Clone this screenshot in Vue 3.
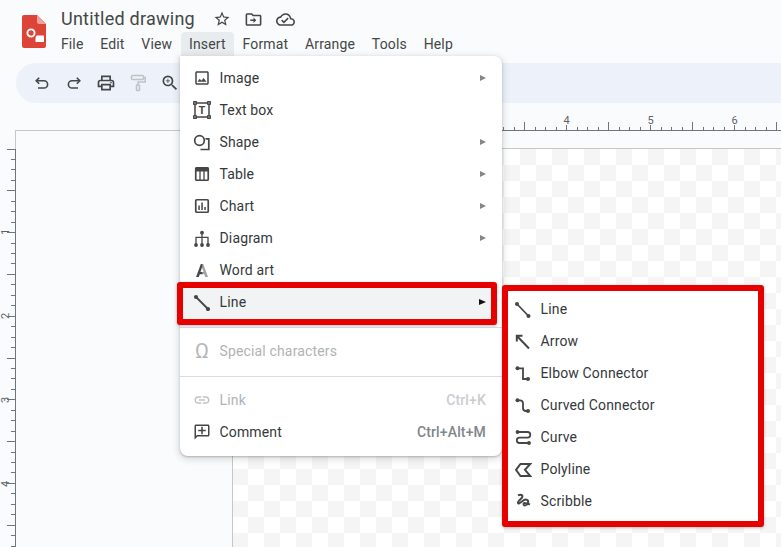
<script setup>
const menuBar = ['File', 'Edit', 'View', 'Insert', 'Format', 'Arrange', 'Tools', 'Help']

const hTicks = []
for (let i = 0; i <= 56; i++) {
  hTicks.push({ x: Math.round(230 + i * 10.5) + 0.5, h: i % 8 === 0 ? 5 : i % 4 === 0 ? 8 : 3 })
}
const vTicks = []
for (let i = 0; i <= 40; i++) {
  vTicks.push({ y: Math.floor(18 + i * 10.45), w: i % 4 === 0 ? 8 : 4 })
}
const hNums = [4, 5, 6].map(n => ({ n, x: 230 + n * 84 + 0.5 }))
const vNums = [1, 2, 3, 4].map(n => ({ n, y: 17 + n * 84 }))
</script>

<template>
  <div class="app">
    <header class="header">
      <svg class="logo" width="24" height="33" viewBox="0 0 24 33">
        <path d="M2 0h13l9 9v22a2 2 0 0 1-2 2H2a2 2 0 0 1-2-2V2a2 2 0 0 1 2-2z" fill="#db4437" />
        <path d="M15 0l9 9h-7a2 2 0 0 1-2-2z" fill="#eea29a" />
        <circle cx="9" cy="18" r="3.6" fill="none" stroke="#fff" stroke-width="1.9" />
        <path d="M14.6 20.5H22V27H13.5v-4.4a5.6 5.6 0 0 0 1.1-2.1z" fill="#fff" />
      </svg>
      <div class="titles">
        <div class="title-row">
          <span class="doc-title">Untitled drawing</span>
          <svg class="star" width="18" height="18" viewBox="0 0 24 24"><path d="M22 9.24l-7.19-.62L12 2 9.19 8.63 2 9.24l5.46 4.73L5.82 21 12 17.27 18.18 21l-1.63-7.03L22 9.24zM12 15.4l-3.76 2.27 1-4.28-3.32-2.88 4.38-.38L12 6.1l1.71 4.04 4.38.38-3.32 2.88 1 4.28L12 15.4z" /></svg>
          <svg class="folder" width="19" height="19" viewBox="0 0 24 24"><path d="M20 6h-8l-2-2H4c-1.1 0-1.99.9-1.99 2L2 18c0 1.1.9 2 2 2h16c1.1 0 2-.9 2-2V8c0-1.1-.9-2-2-2zm0 12H4V6h5.17l2 2H20v10zM12 14H8v-2h4v-2.5l3.5 3.5-3.5 3.5V14z" /></svg>
          <svg class="cloud" width="19" height="19" viewBox="0 0 24 24"><path d="M19.35 10.04C18.67 6.59 15.64 4 12 4 9.11 4 6.6 5.64 5.35 8.04 2.34 8.36 0 10.91 0 14c0 3.31 2.69 6 6 6h13c2.76 0 5-2.24 5-5 0-2.64-2.05-4.78-4.65-4.96zM19 18H6c-2.21 0-4-1.79-4-4 0-2.05 1.53-3.76 3.56-3.97l1.07-.11.5-.95C8.08 7.14 9.94 6 12 6c2.62 0 4.88 1.86 5.39 4.43l.3 1.5 1.53.11c1.56.1 2.78 1.41 2.78 2.96 0 1.65-1.35 3-3 3zm-9-3.82l-2.09-2.09L6.5 13.5 10 17l6.01-6.01-1.41-1.41z" /></svg>
        </div>
        <nav class="menubar">
          <span v-for="m in menuBar" :key="m" class="menubar-item" :class="{ open: m === 'Insert' }">{{ m }}</span>
        </nav>
      </div>
    </header>

    <div class="toolbar">
      <span class="tool"><svg width="18" height="18" viewBox="0 0 18 18" class="st"><path d="M3.500 6.800H11a3.600 3.600 0 0 1 0 7.200H5" /><path d="M6.200 3.800L3.200 6.800l3 3" /></svg></span>
      <span class="tool"><svg width="18" height="18" viewBox="0 0 18 18" class="st"><path d="M14.500 6.800H7a3.600 3.600 0 0 0 0 7.200h6" /><path d="M11.800 3.800l3 3-3 3" /></svg></span>
      <span class="tool"><svg width="20" height="20" viewBox="0 0 24 24"><path d="M19 8h-1V3H6v5H5c-1.66 0-3 1.34-3 3v6h4v4h12v-4h4v-6c0-1.66-1.34-3-3-3zM8 5h8v3H8V5zm8 14H8v-4h8v4zm2-4v-2H6v2H4v-4c0-.55.45-1 1-1h14c.55 0 1 .45 1 1v4h-2z" /><circle cx="18" cy="11.500" r="1" /></svg></span>
      <span class="tool"><svg width="18" height="18" viewBox="0 0 18 18" class="paint"><rect x="2.500" y="1.500" width="12" height="4" rx="1" /><path d="M14.500 3.500H16.200V8H9V11" /><rect x="7.500" y="11" width="3" height="5.500" rx=".6" /></svg></span>
      <span class="tool"><svg width="20" height="20" viewBox="0 0 24 24"><path d="M15.500 14h-.79l-.28-.27A6.470 6.470 0 0 0 16 9.500 6.500 6.500 0 1 0 9.500 16c1.610 0 3.090-.59 4.230-1.570l.27.28v.79l5 4.990L20.490 19l-4.990-5zm-6 0C7.010 14 5 11.990 5 9.500S7.010 5 9.500 5 14 7.010 14 9.500 11.990 14 9.500 14z" /><path d="M10 7H9v2H7v1h2v2h1v-2h2V9h-2z" /></svg></span>
    </div>

    <svg class="hruler" width="781" height="28" viewBox="0 0 781 28">
      <rect x="15" y="27" width="217" height="1" fill="#c7c7c7" />
      <rect x="232" y="27" width="549" height="1" fill="#70757a" />
      <rect v-for="t in hTicks" :key="t.x" :x="t.x - 0.5" :y="27 - t.h" width="1" :height="t.h" fill="#70757a" />
      <text v-for="n in hNums" :key="n.n" :x="n.x" y="21" class="rnum" text-anchor="middle">{{ n.n }}</text>
    </svg>

    <div class="workspace">
      <svg class="vruler" width="16" height="416" viewBox="0 0 16 416">
        <rect x="15" y="0" width="1" height="18" fill="#c7c7c7" />
        <rect x="15" y="18" width="1" height="398" fill="#70757a" />
        <rect v-for="t in vTicks" :key="t.y" :x="15 - t.w" :y="t.y" :width="t.w" height="1" fill="#70757a" />
        <text v-for="n in vNums" :key="n.n" class="rnum" text-anchor="middle" :transform="`translate(8.5 ${n.y}) rotate(-90)`">{{ n.n }}</text>
      </svg>
      <div class="page"></div>
      <div class="stage">
        <div class="stage-strip"></div>
        <div class="canvas"></div>
      </div>
    </div>

    <div class="menu">
      <div class="row">
        <svg class="ic" width="18" height="18" viewBox="0 0 24 24"><path d="M19 5v14H5V5h14m0-2H5c-1.100 0-2 .9-2 2v14c0 1.100.9 2 2 2h14c1.100 0 2-.9 2-2V5c0-1.100-.9-2-2-2zm-4.860 8.860l-3 3.870L9 13.140 6 17h12l-3.860-5.140z" /></svg>
        <span class="label">Image</span><i class="tri"></i>
      </div>
      <div class="row">
        <svg class="ic st1" width="18" height="18" viewBox="0 0 18 18">
          <path d="M2 3.500V14.500M14.500 16H3.500M16 14.500V3.500M3.500 2H14.500" />
          <rect x=".7" y=".7" width="2.600" height="2.600" rx=".4" /><rect x="14.700" y=".7" width="2.600" height="2.600" rx=".4" /><rect x=".7" y="14.700" width="2.600" height="2.600" rx=".4" /><rect x="14.700" y="14.700" width="2.600" height="2.600" rx=".4" />
          <text x="9" y="13" class="tglyph" text-anchor="middle">T</text>
        </svg>
        <span class="label">Text box</span>
      </div>
      <div class="row">
        <svg class="ic st15" width="18" height="18" viewBox="0 0 18 18"><circle cx="6.500" cy="7.500" r="4.800" /><path d="M12.500 5.800H15.800V16.500H7.500" /></svg>
        <span class="label">Shape</span><i class="tri"></i>
      </div>
      <div class="row">
        <svg class="ic st15" width="18" height="18" viewBox="0 0 18 18"><rect x="2.750" y="2.750" width="12.500" height="12.500" rx="1" /><rect class="fl" x="2.500" y="2.500" width="13" height="4" /><path class="thin" d="M7 6V15M11 6V15" /></svg>
        <span class="label">Table</span><i class="tri"></i>
      </div>
      <div class="row">
        <svg class="ic st15" width="18" height="18" viewBox="0 0 18 18"><rect x="2.750" y="2.750" width="12.500" height="12.500" rx="1" /><rect class="fl" x="5.300" y="8.500" width="1.500" height="4.500" /><rect class="fl" x="8.300" y="5.500" width="1.500" height="7.500" /><rect class="fl" x="11.300" y="10" width="1.500" height="3" /></svg>
        <span class="label">Chart</span><i class="tri"></i>
      </div>
      <div class="row">
        <svg class="ic st12" width="18" height="18" viewBox="0 0 18 18"><path d="M9 3.700V16M3 16V8.300H15V16" /><circle class="fl" cx="9" cy="3.700" r="1.900" /><circle class="fl" cx="3" cy="16" r="1.900" /><circle class="fl" cx="9" cy="16" r="1.900" /><circle class="fl" cx="15" cy="16" r="1.900" /></svg>
        <span class="label">Diagram</span><i class="tri"></i>
      </div>
      <div class="row">
        <span class="word-a">A</span>
        <span class="label">Word art</span>
      </div>
      <div class="row active">
        <div class="frame frame-row"></div>
        <svg class="ic st18" width="18" height="18" viewBox="0 0 18 18"><path d="M3 4L15 16" /><circle class="fl" cx="3" cy="4" r="2.100" /><circle class="fl" cx="15" cy="16" r="2.100" /></svg>
        <span class="label">Line</span><i class="tri dark"></i>
      </div>
      <div class="sep"></div>
      <div class="row off">
        <span class="omega">Ω</span>
        <span class="label">Special characters</span>
      </div>
      <div class="sep"></div>
      <div class="row off">
        <svg class="ic" width="18" height="18" viewBox="0 0 24 24"><path d="M3.900 12c0-1.710 1.390-3.100 3.100-3.100h4V7H7c-2.760 0-5 2.240-5 5s2.240 5 5 5h4v-1.900H7c-1.710 0-3.100-1.390-3.100-3.100zM8 13h8v-2H8v2zm9-6h-4v1.900h4c1.710 0 3.100 1.390 3.100 3.100s-1.390 3.100-3.100 3.100h-4V17h4c2.760 0 5-2.240 5-5s-2.240-5-5-5z" /></svg>
        <span class="label">Link</span><span class="key">Ctrl+K</span>
      </div>
      <div class="row">
        <svg class="ic" width="18" height="18" viewBox="0 0 24 24"><path d="M20 2H4c-1.100 0-2 .9-2 2v18l4-4h14c1.100 0 2-.9 2-2V4c0-1.100-.9-2-2-2zm0 14H5.170L4 17.170V4h16v12zM13 5h-2v4H7v2h4v4h2v-4h4V9h-4z" /></svg>
        <span class="label">Comment</span><span class="key">Ctrl+Alt+M</span>
      </div>
    </div>

    <div class="frame submenu">
      <div class="row sub">
        <svg class="ic st18" width="18" height="18" viewBox="0 0 18 18"><path d="M3 4L14.500 16" /><circle class="fl" cx="3" cy="4" r="2" /><circle class="fl" cx="14.500" cy="16" r="2" /></svg>
        <span class="label">Line</span>
      </div>
      <div class="row sub">
        <svg class="ic st2" width="18" height="18" viewBox="0 0 18 18"><path d="M3 4L15 16.500M2.800 9.500V3.800H8.500" /></svg>
        <span class="label">Arrow</span>
      </div>
      <div class="row sub">
        <svg class="ic st18" width="18" height="18" viewBox="0 0 18 18"><path d="M3.500 4.300H9V15H14" /><circle class="fl" cx="3.500" cy="4.300" r="2" /><circle class="fl" cx="14" cy="15" r="2" /></svg>
        <span class="label">Elbow Connector</span>
      </div>
      <div class="row sub">
        <svg class="ic st18" width="18" height="18" viewBox="0 0 18 18"><path d="M3.500 4.300H6Q9 4.300 9 7.500V12Q9 15 12 15H14" /><circle class="fl" cx="3.500" cy="4.300" r="2" /><circle class="fl" cx="14" cy="15" r="2" /></svg>
        <span class="label">Curved Connector</span>
      </div>
      <div class="row sub">
        <svg class="ic st18" width="18" height="18" viewBox="0 0 18 18"><path d="M3.500 4H13.500a2.800 2.800 0 0 1 0 5.600H5.500a2.700 2.700 0 0 0 0 5.400H15" /><circle class="fl" cx="3.500" cy="4" r="1.900" /><circle class="fl" cx="15" cy="15" r="1.900" /></svg>
        <span class="label">Curve</span>
      </div>
      <div class="row sub">
        <svg class="ic st2" width="18" height="18" viewBox="0 0 18 18"><path d="M2 9.800L6.500 4H16.200L11 9.800L16.200 16H6.500Z" /></svg>
        <span class="label">Polyline</span>
      </div>
      <div class="row sub">
        <svg class="ic st2" width="18" height="18" viewBox="0 0 18 18"><path d="M4 3.500C6.500 2 9 3 8.200 5.200C7.500 7 3.500 9 4 11C4.500 12.800 7.500 9.500 10 8C12 7 15 8 14 10.800C13 13.500 9.500 14.500 9.500 12C9.500 10.500 12.500 11 16 12.500" /></svg>
        <span class="label">Scribble</span>
      </div>
    </div>
  </div>
</template>

<style scoped>
.app {
  position: relative;
  width: 781px;
  height: 547px;
  overflow: hidden;
  display: flex;
  flex-direction: column;
  background: #f9fbfd;
  font-family: Roboto, "Liberation Sans", sans-serif;
  font-size: 14px;
  letter-spacing: 0.15px;
  color: #35383b;
}
.header { height: 63px; flex: none; display: flex; align-items: flex-start; padding-left: 22px; box-sizing: border-box; }
.logo { margin-top: 15px; flex: none; }
.titles { margin-left: 15px; padding-top: 6px; }
.title-row { height: 26px; display: flex; align-items: center; }
.doc-title { font-size: 18px; letter-spacing: 0.25px; color: #444746; width: 152px; margin-top: -2px; }
.title-row svg { fill: #444746; flex: none; }
.star { margin-right: 13px; }
.folder { margin-right: 13px; }
.menubar { display: flex; gap: 0; margin-left: -8.5px; height: 24px; }
.menubar-item { padding: 0 8.4px; line-height: 24px; color: #444746; border-radius: 4px 4px 0 0; }
.menubar-item.open { background: #e9ecef; }
.toolbar {
  height: 40px; flex: none; margin-left: 16px;
  background: #edf2fa; border-radius: 20px 0 0 20px;
  display: flex; align-items: center; padding-left: 10px;
}
.tool { width: 32px; height: 32px; display: flex; align-items: center; justify-content: center; }
.tool svg { fill: #444746; }
.tool .st { fill: none; stroke: #444746; stroke-width: 1.6; }
.tool .paint { fill: none; stroke: #bfc3c7; stroke-width: 1.6; }
.hruler { display: block; flex: none; }
.rnum { font-size: 11px; fill: #5f6368; font-family: Roboto, sans-serif; letter-spacing: 0; }
.workspace { flex: 1; display: grid; grid-template-columns: 16px 216px 1fr; min-height: 0; }
.vruler { display: block; }
.stage { display: flex; flex-direction: column; min-height: 0; }
.stage-strip { height: 17px; flex: none; border-bottom: 1px solid #c7c7c7; }
.canvas {
  flex: 1;
  border-left: 1px solid #c7c7c7;
  background-image: conic-gradient(#fff 25%, #f5f5f5 0 50%, #fff 0 75%, #f5f5f5 0);
  background-size: 32px 32px;
  background-position: -1px 0;
}
.menu {
  position: absolute; left: 180px; top: 56px; width: 322px; height: 400px;
  box-sizing: border-box; padding: 6px 0 8px;
  background: #fff; border-radius: 0 8px 8px 8px;
  box-shadow: 0 1px 2px rgba(60, 64, 67, .3), 0 2px 6px 2px rgba(60, 64, 67, .15);
}
.row {
  position: relative; isolation: isolate;
  height: 32px; display: flex; align-items: center;
  padding: 0 16px 0 13px;
}
.row.sub { padding: 0 0 0 6px; }
.ic { flex: none; fill: #444746; margin-right: 8.5px; }
.st1 { fill: none; stroke: #444746; stroke-width: 1.5; }
.st12 { fill: none; stroke: #444746; stroke-width: 1.3; }
.st15 { fill: none; stroke: #444746; stroke-width: 1.7; }
.st18 { fill: none; stroke: #444746; stroke-width: 1.8; }
.st2 { fill: none; stroke: #444746; stroke-width: 2; }
.thin { stroke-width: 1.3; }
.fl { fill: #444746; stroke: none; }
.tglyph { font: 700 11px Roboto, sans-serif; fill: #444746; stroke: none; letter-spacing: 0; }
.label { flex: 1; }
.tri { flex: none; width: 0; height: 0; border-left: 6px solid #80868b; border-top: 3.5px solid transparent; border-bottom: 3.5px solid transparent; }
.tri.dark { border-left-color: #111; border-left-width: 7px; }
.word-a {
  width: 18px; margin-right: 8.5px; flex: none; text-align: center;
  font-size: 18px; font-weight: 700; letter-spacing: 0;
  background: linear-gradient(90deg, #444746 50%, #a0a3a7 54%);
  -webkit-background-clip: text; background-clip: text; color: transparent;
}
.omega { width: 18px; margin-right: 8.5px; flex: none; text-align: center; font-size: 21px; letter-spacing: 0; color: #b5b8ba; }
.off { color: #b0b3b5; }
.off .ic { fill: #c0c2c4; }
.key { color: #80868b; font-weight: 500; }
.off .key { color: #cbcdcf; }
.sep { height: 1px; background: #dadce0; margin: 9px 0 7px; }
.frame {
  box-sizing: border-box; border: 6px solid #e60000; border-radius: 3px;
  box-shadow: 0 1px 3px rgba(60, 64, 67, .35);
}
.frame-row {
  position: absolute; z-index: -1; left: -3px; top: -4px; width: 320px; height: 43px;
  background: #f1f3f4;
}
.submenu {
  position: absolute; left: 502px; top: 285px; width: 262px; height: 242px;
  padding: 2px 0 4px; background: #fff;
}
</style>

<style>
html, body { margin: 0; }
</style>
